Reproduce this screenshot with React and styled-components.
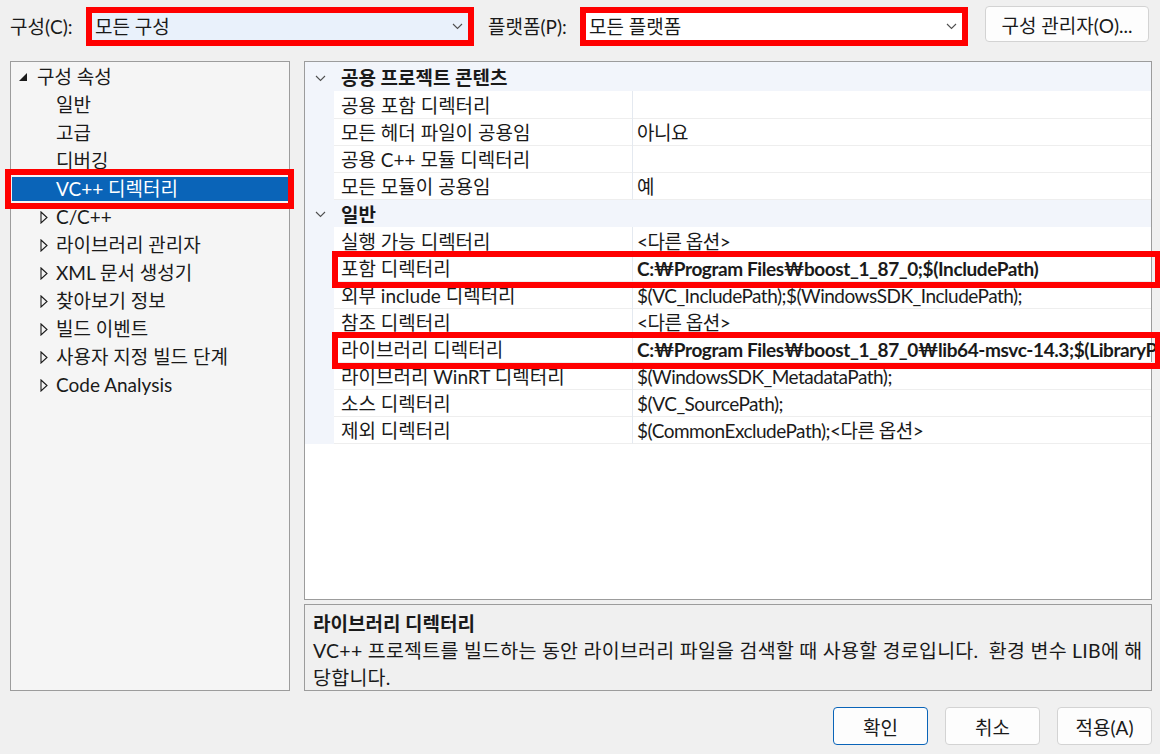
import React from 'react';
import styled, { createGlobalStyle, css } from 'styled-components';

const GlobalStyle = createGlobalStyle`
  html, body {
    margin: 0;
    padding: 0;
    overflow: hidden;
  }
  body {
    background: #f0f0f0;
    font-family: Lato, "Noto Sans CJK KR", sans-serif;
    color: #1a1a1a;
  }
`;

const treeItems = [
  { label: '구성 속성', level: 0, icon: 'open' },
  { label: '일반', level: 1 },
  { label: '고급', level: 1 },
  { label: '디버깅', level: 1 },
  { label: 'VC++ 디렉터리', level: 1, selected: true },
  { label: 'C/C++', level: 1, icon: 'closed' },
  { label: '라이브러리 관리자', level: 1, icon: 'closed' },
  { label: 'XML 문서 생성기', level: 1, icon: 'closed' },
  { label: '찾아보기 정보', level: 1, icon: 'closed' },
  { label: '빌드 이벤트', level: 1, icon: 'closed' },
  { label: '사용자 지정 빌드 단계', level: 1, icon: 'closed' },
  { label: 'Code Analysis', level: 1, icon: 'closed' },
];

const sections = [
  {
    title: '공용 프로젝트 콘텐츠',
    rows: [
      { name: '공용 포함 디렉터리', value: '' },
      { name: '모든 헤더 파일이 공용임', value: '아니요' },
      { name: '공용 C++ 모듈 디렉터리', value: '' },
      { name: '모든 모듈이 공용임', value: '예' },
    ],
  },
  {
    title: '일반',
    rows: [
      { name: '실행 가능 디렉터리', value: '<다른 옵션>' },
      { name: '포함 디렉터리', value: 'C:₩Program Files₩boost_1_87_0;$(IncludePath)', changed: true },
      { name: '외부 include 디렉터리', value: '$(VC_IncludePath);$(WindowsSDK_IncludePath);' },
      { name: '참조 디렉터리', value: '<다른 옵션>' },
      { name: '라이브러리 디렉터리', value: 'C:₩Program Files₩boost_1_87_0₩lib64-msvc-14.3;$(LibraryPath)', changed: true },
      { name: '라이브러리 WinRT 디렉터리', value: '$(WindowsSDK_MetadataPath);' },
      { name: '소스 디렉터리', value: '$(VC_SourcePath);' },
      { name: '제외 디렉터리', value: '$(CommonExcludePath);<다른 옵션>' },
    ],
  },
];

const Chevron = () => (
  <svg width="11" height="7" viewBox="0 0 11 7">
    <polyline points="1,1 5.5,5.5 10,1" fill="none" stroke="#505050" strokeWidth="1.1" />
  </svg>
);

const OpenTriangle = () => (
  <svg width="8" height="8" viewBox="0 0 8 8">
    <polygon points="8,0 8,8 0,8" fill="#1a1a1a" />
  </svg>
);

const ClosedTriangle = () => (
  <svg width="8" height="13" viewBox="0 0 8 13">
    <polygon points="1,1 7,6.5 1,12" fill="none" stroke="#1a1a1a" strokeWidth="1.1" strokeLinejoin="miter" />
  </svg>
);

const App = () => {
  return (
    <Window>
      <GlobalStyle />
      <TopBar>
        <FieldLabel $w={76}>구성(C):</FieldLabel>
        <Marked>
          <Combo $focused>
            <span>모든 구성</span>
            <Chevron />
          </Combo>
        </Marked>
        <FieldLabel $w={92} $ml={14}>플랫폼(P):</FieldLabel>
        <Marked>
          <Combo>
            <span>모든 플랫폼</span>
            <Chevron />
          </Combo>
        </Marked>
        <ManagerButton>구성 관리자(O)...</ManagerButton>
      </TopBar>

      <Main>
        <Tree>
          {treeItems.map((item) => (
            <TreeRow key={item.label} $level={item.level} $selected={item.selected}>
              <Expander $level={item.level}>
                {item.icon === 'open' && <OpenTriangle />}
                {item.icon === 'closed' && <ClosedTriangle />}
              </Expander>
              <span>{item.label}</span>
            </TreeRow>
          ))}
        </Tree>

        <RightColumn>
          <Grid>
            {sections.map((section, i) => (
              <React.Fragment key={section.title}>
                <CategoryRow $first={i === 0}>
                  <CategorySlot>
                    <Chevron />
                  </CategorySlot>
                  {section.title}
                </CategoryRow>
                {section.rows.map((row) => (
                  <PropRow key={row.name} $marked={row.changed}>
                    <Gutter />
                    <NameCell>{row.name}</NameCell>
                    <ValueCell $bold={row.changed}>{row.value}</ValueCell>
                  </PropRow>
                ))}
              </React.Fragment>
            ))}
          </Grid>
          <Description>
            <DescTitle>라이브러리 디렉터리</DescTitle>
            <DescText>
              VC++ 프로젝트를 빌드하는 동안 라이브러리 파일을 검색할 때 사용할 경로입니다.&nbsp; 환경 변수 LIB에 해당합니다.
            </DescText>
          </Description>
        </RightColumn>
      </Main>

      <Footer>
        <DialogButton $primary>확인</DialogButton>
        <DialogButton>취소</DialogButton>
        <DialogButton>적용(A)</DialogButton>
      </Footer>
    </Window>
  );
};

export default App;

const redBox = css`
  content: '';
  position: absolute;
  border: 6px solid #ff0000;
  pointer-events: none;
  z-index: 2;
`;

const Window = styled.div`
  width: 1160px;
  height: 754px;
  display: flex;
  flex-direction: column;
  font-size: 19px;
`;

const TopBar = styled.div`
  height: 55px;
  box-sizing: border-box;
  padding: 6px 0 0 10px;
  display: flex;
  align-items: flex-start;
`;

const FieldLabel = styled.div`
  width: ${(p) => p.$w}px;
  margin-left: ${(p) => p.$ml || 0}px;
  line-height: 42px;
  white-space: nowrap;
`;

const Marked = styled.div`
  margin-top: 1px;
  width: 388px;
  box-sizing: border-box;
  border: 6px solid #ff0000;
`;

const Combo = styled.div`
  height: 27px;
  display: flex;
  align-items: center;
  justify-content: space-between;
  padding: 0 5px 0 3px;
  background: ${(p) => (p.$focused ? '#e9f1fb' : '#ffffff')};
  line-height: 27px;
`;

const ManagerButton = styled.div`
  margin-left: 17px;
  width: 164px;
  height: 36px;
  box-sizing: border-box;
  display: flex;
  align-items: center;
  justify-content: center;
  background: #fdfdfd;
  border: 1px solid #d3d3d3;
  border-radius: 4px;
`;

const Main = styled.div`
  display: flex;
  gap: 14px;
  padding-left: 10px;
  margin-top: 6px;
`;

const Tree = styled.div`
  width: 280px;
  height: 630px;
  box-sizing: border-box;
  border: 1px solid #9c9c9c;
  background: #f5f5f5;
  padding-top: 3px;
  display: flex;
  flex-direction: column;
  gap: 4px;
`;

const TreeRow = styled.div`
  position: relative;
  height: 24px;
  margin: 0 1px;
  display: flex;
  align-items: center;
  padding-left: ${(p) => (p.$level ? 28 : 7)}px;
  line-height: 24px;
  white-space: nowrap;
  ${(p) =>
    p.$selected &&
    css`
      background: #0a64b8;
      color: #ffffff;
      &::after {
        ${redBox};
        top: -8px;
        bottom: -8px;
        left: -7px;
        right: -6px;
      }
    `}
`;

const Expander = styled.span`
  width: ${(p) => (p.$level ? 16 : 18)}px;
  flex: none;
  display: flex;
  align-items: center;
`;

const RightColumn = styled.div`
  width: 848px;
  display: flex;
  flex-direction: column;
  gap: 4px;
`;

const Grid = styled.div`
  height: 539px;
  box-sizing: border-box;
  border: 1px solid #9c9c9c;
  background: #ffffff;
`;

const CategoryRow = styled.div`
  height: ${(p) => (p.$first ? 29 : 28)}px;
  display: flex;
  align-items: center;
  background: #f2f5fb;
  font-weight: 700;
  line-height: 28px;
  padding-top: 3px;
  box-sizing: border-box;
`;

const CategorySlot = styled.span`
  width: 36px;
  flex: none;
  display: flex;
  align-items: center;
  padding-left: 10px;
  box-sizing: border-box;
`;

const PropRow = styled.div`
  position: relative;
  height: 27px;
  display: grid;
  grid-template-columns: 29px 298px 1fr;
  line-height: 26px;
  ${(p) =>
    p.$marked &&
    css`
      &::after {
        ${redBox};
        top: -3px;
        bottom: -7px;
        left: 27px;
        right: -10px;
      }
    `}
`;

const Gutter = styled.div`
  background: #f2f5fb;
`;

const NameCell = styled.div`
  padding: 3px 0 0 7px;
  box-sizing: border-box;
  border-bottom: 1px solid #eeeeee;
  white-space: nowrap;
  line-height: 24px;
`;

const ValueCell = styled.div`
  padding: 3px 0 0 4px;
  box-sizing: border-box;
  border-left: 1px solid #e4e9f0;
  border-bottom: 1px solid #eeeeee;
  white-space: nowrap;
  line-height: 24px;
  font-weight: ${(p) => (p.$bold ? 700 : 400)};
  letter-spacing: ${(p) => (p.$bold ? '-0.4px' : '-0.5px')};
`;

const Description = styled.div`
  height: 87px;
  box-sizing: border-box;
  border: 1px solid #9c9c9c;
  background: #f0f0f0;
  padding: 5px 2px 0 8px;
`;

const DescTitle = styled.div`
  font-weight: 700;
  line-height: 27px;
`;

const DescText = styled.div`
  font-size: 19.5px;
  letter-spacing: 0.25px;
  line-height: 27px;
`;

const Footer = styled.div`
  display: flex;
  justify-content: flex-end;
  gap: 17px;
  padding-right: 8px;
  margin-top: 16px;
`;

const DialogButton = styled.div`
  width: 95px;
  height: 38px;
  box-sizing: border-box;
  display: flex;
  align-items: center;
  justify-content: center;
  background: #fdfdfd;
  border: 1px solid ${(p) => (p.$primary ? '#0a64b8' : '#d3d3d3')};
  border-radius: 4px;
`;
